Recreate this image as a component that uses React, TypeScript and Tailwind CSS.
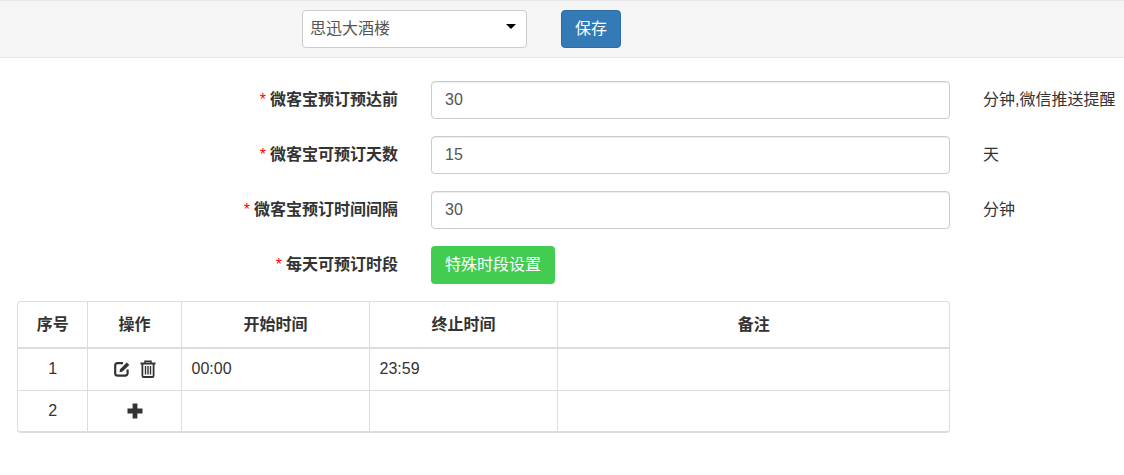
const font = "font-['Liberation_Sans','Noto_Sans_CJK_SC',sans-serif]";

const rows = [
	{ label: "微客宝预订预达前", value: "30", unit: "分钟,微信推送提醒" },
	{ label: "微客宝可预订天数", value: "15", unit: "天" },
	{ label: "微客宝预订时间间隔", value: "30", unit: "分钟" },
];

const Label = ({ text }: { text: string }) => (
	<label className="w-[398px] shrink-0 text-right text-[16px] font-bold text-[#333]">
		<span className="mr-1 font-normal text-[#f00]">*</span>
		{text}
	</label>
);

const EditIcon = () => (
	<svg width="18" height="16" viewBox="0 0 18 16" fill="none" className="text-[#333]">
		<path
			d="M9 2.2H3.6A2.4 2.4 0 0 0 1.2 4.6v7.6a2.4 2.4 0 0 0 2.4 2.4h7.6a2.4 2.4 0 0 0 2.4-2.4V8.5"
			stroke="currentColor"
			strokeWidth="2.2"
		/>
		<path d="M5.5 11.2l.6-3L12.8 1.5l2.5 2.5L8.5 10.6z" fill="currentColor" />
	</svg>
);

const TrashIcon = () => (
	<svg width="16" height="18" viewBox="0 0 16 18" fill="none" stroke="currentColor" className="text-[#333]">
		<path d="M.5 3.5h15" strokeWidth="1.8" />
		<path d="M5 3.2V1.2h6v2" strokeWidth="1.5" />
		<path d="M2.4 3.5v12.2a1.3 1.3 0 0 0 1.3 1.3h8.6a1.3 1.3 0 0 0 1.3-1.3V3.5" strokeWidth="1.8" />
		<path d="M5.5 6v8.5M8 6v8.5M10.5 6v8.5" strokeWidth="1.4" />
	</svg>
);

const PlusIcon = () => (
	<svg width="16" height="16" viewBox="0 0 16 16" className="mx-auto text-[#333]">
		<path d="M5.6 .5h4.8v5.1h5.1v4.8h-5.1v5.1H5.6v-5.1H.5V5.6h5.1z" fill="currentColor" />
	</svg>
);

const App = () => {
	return (
		<div className={`${font} h-[475px] w-[1124px] overflow-hidden bg-white text-[16px] text-[#333]`}>
			<div className="flex h-[58px] items-start gap-[34px] border-y border-[#e7e7e7] bg-[#f5f5f5] pl-[302px] pt-[9px]">
				<div className="relative flex h-[38px] w-[225px] items-center rounded border border-[#ccc] bg-white pl-[7px] text-[#555]">
					思迅大酒楼
					<span className="absolute right-[10px] top-[13px] h-0 w-0 border-x-[5px] border-t-[5px] border-x-transparent border-t-black" />
				</div>
				<button className="h-[38px] w-[60px] rounded border border-[#2e6da4] bg-[#337ab7] text-white">
					保存
				</button>
			</div>

			<div className="flex flex-col gap-[17px] pt-[23px]">
				{rows.map((row) => (
					<div key={row.label} className="flex items-center">
						<Label text={row.label} />
						<input
							readOnly
							value={row.value}
							className="ml-[33px] h-[38px] w-[519px] rounded border border-[#ccc] px-[13px] text-[#555] shadow-[inset_0_1px_1px_rgba(0,0,0,0.075)]"
						/>
						<span className="ml-[33px] whitespace-nowrap">{row.unit}</span>
					</div>
				))}
				<div className="flex items-center">
					<Label text="每天可预订时段" />
					<button className="ml-[33px] h-[38px] w-[124px] rounded bg-[#42cd52] text-white">
						特殊时段设置
					</button>
				</div>
			</div>

			<div className="ml-[17px] mt-[17px] w-[933px] overflow-hidden rounded border-x border-t border-b-2 border-[#ddd]">
				<table className="w-full table-fixed border-collapse">
					<colgroup>
						<col className="w-[69px]" />
						<col className="w-[94px]" />
						<col className="w-[188px]" />
						<col className="w-[188px]" />
						<col />
					</colgroup>
					<thead>
						<tr className="h-[46px] border-b-2 border-[#ddd] font-bold">
							<th className="pl-px">序号</th>
							<th className="border-l border-[#ddd] pl-px">操作</th>
							<th className="border-l border-[#ddd] pl-px">开始时间</th>
							<th className="border-l border-[#ddd] pl-px">终止时间</th>
							<th className="border-l border-[#ddd] pl-px">备注</th>
						</tr>
					</thead>
					<tbody>
						<tr className="h-[42px] border-b border-[#ddd]">
							<td className="pl-px text-center">1</td>
							<td className="border-l border-[#ddd] pl-px">
								<div className="flex items-center justify-center gap-[8px]">
									<EditIcon />
									<TrashIcon />
								</div>
							</td>
							<td className="border-l border-[#ddd] pl-[10px]">00:00</td>
							<td className="border-l border-[#ddd] pl-[10px]">23:59</td>
							<td className="border-l border-[#ddd]" />
						</tr>
						<tr className="h-[41px]">
							<td className="pl-px text-center">2</td>
							<td className="border-l border-[#ddd] pl-px">
								<PlusIcon />
							</td>
							<td className="border-l border-[#ddd]" />
							<td className="border-l border-[#ddd]" />
							<td className="border-l border-[#ddd]" />
						</tr>
					</tbody>
				</table>
			</div>
		</div>
	);
};

export default App;
